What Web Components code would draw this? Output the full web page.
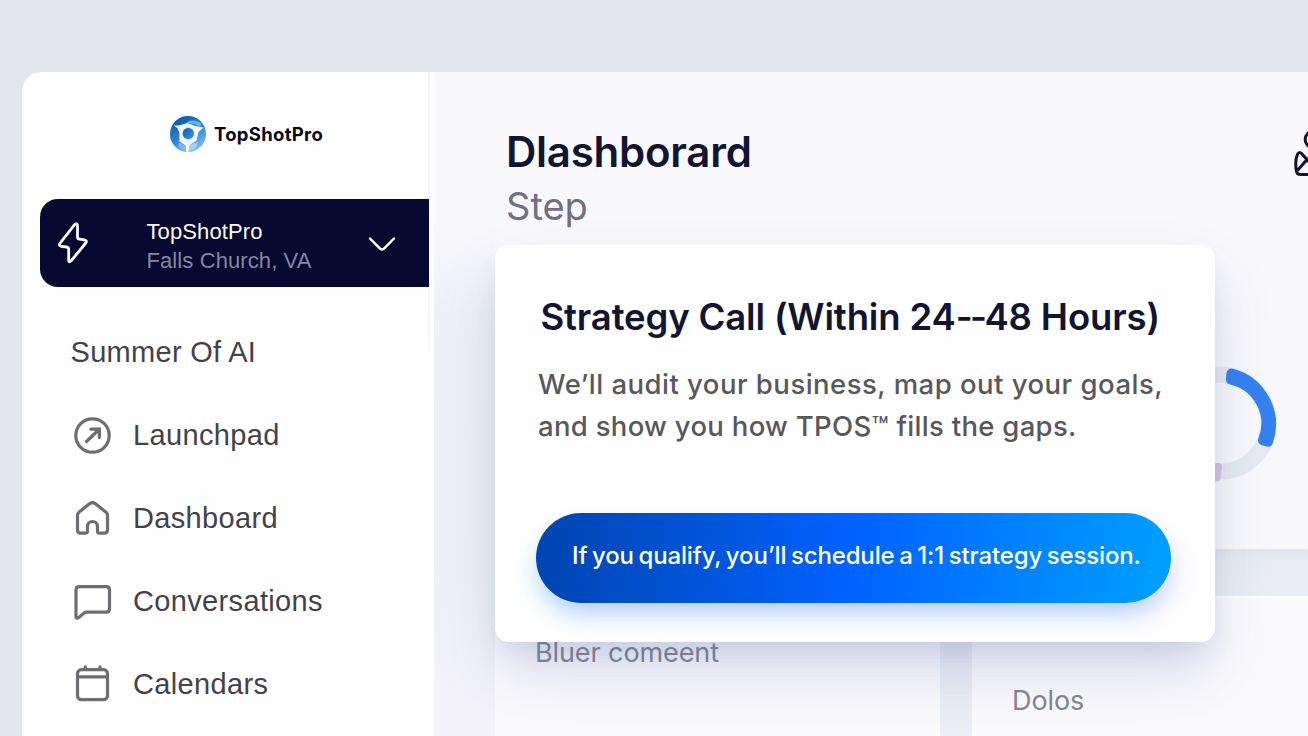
<!DOCTYPE html>
<html lang="en">
<head>
<meta charset="utf-8">
<title>TopShotPro</title>
<style>
  body {
    margin: 0;
    height: 736px;
    overflow: hidden;
    background: #e3e6ee;
    font-family: "Liberation Sans", sans-serif;
  }
  .dash { letter-spacing: -2.600px; }
</style>
</head>
<body>

<app-shell>
  <side-bar slot="side">
    <brand-logo slot="brand">TopShotPro</brand-logo>
    <account-switcher slot="account">
      TopShotPro
      <span slot="place">Falls Church, VA</span>
    </account-switcher>
    <nav-item plain>Summer Of AI</nav-item>
    <nav-item icon="launch">Launchpad</nav-item>
    <nav-item icon="home">Dashboard</nav-item>
    <nav-item icon="chat">Conversations</nav-item>
    <nav-item icon="calendar">Calendars</nav-item>
  </side-bar>

  <dash-stage>
    <page-title>Dlashborard<span slot="sub">Step</span></page-title>
    <people-icon slot="action"></people-icon>
    <progress-ring slot="chart"></progress-ring>
  </dash-stage>

  <card-row>
    <info-card style="--top: 41px">Bluer comeent</info-card>
    <info-card style="--top: 89px">Dolos</info-card>
  </card-row>

  <call-dialog slot="dialog">
    <span slot="heading">Strategy Call (Within 24<span class="dash">--</span>48 Hours)</span>
    <span slot="line1">We’ll audit your business, map out your goals,</span>
    <span slot="line2">and show you how TPOS™ fills the gaps.</span>
    <pill-button>If you qualify, you’ll schedule a 1:1 strategy session.</pill-button>
  </call-dialog>
</app-shell>

<script>
// small helper: registers an element whose shadow root is cloned from a template
function define(name, html) {
  const template = document.createElement('template');
  template.innerHTML = html;

  window.customElements.define(name, class extends HTMLElement {
    constructor() {
      super();
      this.attachShadow({ mode: 'open' });
      this.shadowRoot.appendChild(template.content.cloneNode(true));
    }
  });
}

define('app-shell', `
<style>
:host {
  display: grid;
  grid-template-columns: 412px 1fr;
  box-sizing: border-box;
  height: 736px;
  padding: 72px 0 0 22px;
  position: relative;
}
main {
  display: flex;
  flex-direction: column;
  min-width: 0;
  background: linear-gradient(#f9f8fc 150px, #eff1f8 240px, #eef0f8 480px, #f4f3f9 650px);
}
</style>
<slot name="side"></slot>
<main><slot></slot></main>
<slot name="dialog"></slot>
`);

define('side-bar', `
<style>
:host {
  display: flex;
  flex-direction: column;
  background: linear-gradient(#f4f3f8, #f9f9fb) 406px 0 / 2px 278px no-repeat #fefefe;
  border-radius: 20px 0 0 0;
}
.brand {
  height: 127px;
  box-sizing: border-box;
  padding: 44px 0 0 148px;
}
.account {
  padding: 0 5px 0 18px;
}
nav {
  display: flex;
  flex-direction: column;
  padding-top: 23px;
}
</style>
<div class="brand"><slot name="brand"></slot></div>
<div class="account"><slot name="account"></slot></div>
<nav><slot></slot></nav>
`);

define('brand-logo', `
<style>
:host {
  display: flex;
  align-items: center;
  gap: 8px;
  height: 36px;
  font: 700 18.500px/24px Inter, sans-serif;
  letter-spacing: 0.3px;
  color: #0a0a0c;
}
svg { display: block; }
</style>
<svg width="36" height="36" viewBox="0 0 36 36">
  <defs>
    <linearGradient id="g" x1="0.2" y1="0" x2="0.8" y2="1">
      <stop offset="0" stop-color="#0d50a8"/>
      <stop offset="0.5" stop-color="#2c86d6"/>
      <stop offset="1" stop-color="#8fc3f0"/>
    </linearGradient>
    <linearGradient id="d" x1="0" y1="0" x2="1" y2="1">
      <stop offset="0" stop-color="#0f57b0"/>
      <stop offset="1" stop-color="#3c96e2"/>
    </linearGradient>
  </defs>
  <circle cx="18" cy="18" r="18" fill="url(#g)"/>
  <path d="M17 6C22 3.500 28 4.500 31.500 8L30 11C26 8 22 7 17 7.500Z" fill="#6fb2ec"/>
  <path d="M19 29.500L28 26C27 31 24 34.500 19 35.500Z" fill="#a9cdf2"/>
  <path d="M8.500 31L9 26.500L15.500 30L16 35.500Q11.500 34.500 8.500 31Z" fill="#7fb8ee"/>
  <path d="M3.500 9.500L9 9.500L17.500 7L25.500 10L33.500 11.500L28.500 16L26.500 24.500L19.500 29.500L18.500 36L16 35.500L15.500 29.500L9.500 25.500L9.300 16.500L7.500 12Z" fill="#f4f9fe"/>
  <path d="M12 13.500L18 10.200L24.300 13.200L24.600 20.500L18.500 25.500L12 21.500Z" fill="#d5e7f8"/>
  <circle cx="18.300" cy="17.500" r="5.600" fill="url(#d)"/>
</svg>
<span><slot></slot></span>
`);

define('account-switcher', `
<style>
:host {
  display: flex;
  box-sizing: border-box;
  height: 88px;
  padding: 18px 33px 0 13px;
  background: #06082f;
  border-radius: 18px 0 0 18px;
  color: #fcfcf6;
  font-size: 22px;
  line-height: 29px;
  letter-spacing: 0.1px;
}
.text {
  display: flex;
  flex-direction: column;
  flex: 1;
  padding-left: 53.500px;
}
.place { color: #8586a3; }
svg { display: block; fill: none; stroke: #fff; stroke-linecap: round; stroke-linejoin: round; }
.bolt { margin-top: 2px; stroke-width: 2.800; }
.chevron { margin-top: 19px; stroke-width: 2.500; }
</style>
<svg class="bolt" width="40" height="48" viewBox="0 0 40 48">
  <path d="M21.400 5.800Q24.500 3.400 24.500 7V18Q24.500 20 26.500 20.200L31.500 20.900Q34.500 21.500 32.800 24L18 42Q15.700 44 15.700 41V30.500Q15.700 28.300 13.500 28L8.500 27.300Q5.300 26.700 7.200 24Z"/>
</svg>
<div class="text">
  <span><slot></slot></span>
  <span class="place"><slot name="place"></slot></span>
</div>
<svg class="chevron" width="28" height="18" viewBox="0 0 28 18">
  <path d="M2 2.500L11.500 12.200Q14 14.800 16.500 12.200L26 2.500"/>
</svg>
`);

const navIcons = {
  launch: '<circle cx="20.500" cy="20.500" r="16.700"/><path d="M14.500 26.500L27 14.500M19 14.200H27.400V22.500" stroke-linejoin="miter"/>',
  home: '<path d="M5.500 17.500Q5.500 15.300 7.200 14L17.800 5.600Q20.500 3.800 23.200 5.600L33.800 14Q35.500 15.300 35.500 17.500V32Q35.500 35.200 32.500 35.200H27.800Q25.500 35.200 25.500 33V28.500A5 5 0 0 0 15.500 28.500V33Q15.500 35.200 13.200 35.200H8.500Q5.500 35.200 5.500 32Z"/>',
  chat: '<path d="M4 8.800Q4 5.600 7.200 5.600H34.300Q37.500 5.600 37.500 8.800V28Q37.500 31.200 34.300 31.200H14.800Q13 31.200 11.800 32.200L6.500 36.700Q4 38.200 4 35.500Z"/>',
  calendar: '<rect x="5.500" y="5.700" width="30" height="30" rx="4"/><path d="M5.500 12.800H35.500M13.300 2.800V5.500M28 2.800V5.500"/>'
};

class NavItem extends HTMLElement {
  constructor() {
    super();
    this.attachShadow({ mode: 'open' });
    const icon = navIcons[this.getAttribute('icon')];
    this.shadowRoot.innerHTML = `
<style>
:host {
  display: flex;
  align-items: center;
  gap: 21px;
  height: 83px;
  padding-left: 50px;
  color: #444249;
  font-size: 29px;
  line-height: 34px;
  letter-spacing: 0.35px;
}
:host([plain]) { padding-left: 48.500px; letter-spacing: 0.3px; }
svg { display: block; fill: none; stroke: #6f6d74; stroke-width: 3.200; stroke-linecap: round; stroke-linejoin: round; }
</style>
${icon ? `<svg width="40" height="40" viewBox="0 0 40 40">${icon}</svg>` : ''}
<span><slot></slot></span>
`;
  }
}
window.customElements.define('nav-item', NavItem);

define('dash-stage', `
<style>
:host {
  display: flex;
  flex-direction: column;
  height: 477px;
  background: linear-gradient(90deg, transparent 61px, #f9f8fc 61px);
}
header {
  display: flex;
  justify-content: space-between;
  height: 287px;
  box-sizing: border-box;
  padding: 55px 0 0 72px;
}
.chart {
  display: flex;
  justify-content: flex-end;
  padding-right: 24px;
}
</style>
<header><slot></slot><slot name="action"></slot></header>
<div class="chart"><slot name="chart"></slot></div>
`);

define('page-title', `
<style>
:host {
  display: flex;
  flex-direction: column;
  gap: 6px;
  font-family: Inter, sans-serif;
}
.title { font-size: 42px; font-weight: 600; line-height: 50px; letter-spacing: -0.25px; color: #11152f; }
.sub { font-size: 38px; line-height: 46px; color: #716f85; }
</style>
<span class="title"><slot></slot></span>
<span class="sub"><slot name="sub"></slot></span>
`);

define('people-icon', `
<style>
:host { display: block; width: 16px; height: 52px; overflow: hidden; }
svg { display: block; fill: none; stroke: #11152a; stroke-width: 3; stroke-linecap: round; stroke-linejoin: round; }
</style>
<svg width="40" height="52" viewBox="0 0 40 52">
  <circle cx="21.500" cy="12.500" r="8.300"/>
  <path d="M4.500 44.500Q2.600 34 5.400 27.500Q7.500 23.500 10.500 27.500L16.500 34.500M4.500 44.500Q5 47.500 8.500 47.500H30M4.500 44.500L15.500 32"/>
</svg>
`);

define('progress-ring', `
<style>
:host { display: block; }
svg { display: block; }
</style>
<svg width="128" height="128" viewBox="-64 -64 128 128">
  <circle r="48.500" fill="none" stroke="#e7eaf1" stroke-width="16"/>
  <path d="M11.500 -49.500A52.500 52.500 0 0 1 48 18.800L43 17.300A45 45 0 0 0 11 -43.500Z" fill="#3481ef" stroke="#3481ef" stroke-width="10" stroke-linejoin="round"/>
  <path d="M-1.500 43.500L-3 55H-30V43.500Z" fill="#dcc0e2" stroke="#dcc0e2" stroke-width="7" stroke-linejoin="round"/>
</svg>
`);

define('card-row', `
<style>
:host {
  display: grid;
  grid-template-columns: 445px 1fr;
  gap: 32px;
  flex: 1;
  margin-left: 61px;
  padding-top: 47px;
  background: linear-gradient(#e3e6ee, #e9ecf2 12px, #ebeef3 47px, #ecedf5);
}
</style>
<slot></slot>
`);

define('info-card', `
<style>
:host {
  display: block;
  padding: var(--top) 40px 0;
  background: #fbfafd;
  border-top: 3px solid #fefefe;
  margin-bottom: -3px;
  font: 27px/32px Inter, sans-serif;
  letter-spacing: -0.1px;
  color: #85858f;
}
span { display: block; margin-top: -3px; }
</style>
<span><slot></slot></span>
`);

// floats above the dashboard
define('call-dialog', `
<style>
:host {
  position: absolute;
  left: 495px;
  top: 245px;
  box-sizing: border-box;
  display: flex;
  flex-direction: column;
  width: 719.500px;
  height: 397px;
  padding: 50px 44px 0 41px;
  background: #fefefe;
  border-radius: 14px;
  box-shadow: 0 32px 60px -4px rgba(75, 95, 165, 0.22), 0 14px 24px -6px rgba(75, 90, 140, 0.12);
  font-family: Inter, sans-serif;
  white-space: nowrap;
}
.heading {
  padding-left: 4.500px;
  font-size: 36.500px;
  font-weight: 600;
  line-height: 44px;
  letter-spacing: -0.15px;
  color: #11152f;
}
.text {
  display: flex;
  flex-direction: column;
  padding: 24px 0 66px 2px;
  font-size: 27.500px;
  font-weight: 450;
  line-height: 42px;
  letter-spacing: 0.48px;
  color: #58585b;
}
.second { letter-spacing: 0.3px; }
</style>
<div class="heading"><slot name="heading"></slot></div>
<div class="text">
  <span><slot name="line1"></slot></span>
  <span class="second"><slot name="line2"></slot></span>
</div>
<slot></slot>
`);

define('pill-button', `
<style>
:host {
  display: flex;
  align-items: center;
  box-sizing: border-box;
  height: 90px;
  padding: 0 0 5px 36px;
  border-radius: 45px;
  background: linear-gradient(97deg, #0047b5 4%, #0062ff 50%, #009dff 97%);
  box-shadow: 6px 14px 24px -4px rgba(110, 115, 235, 0.25), -6px 14px 22px -6px rgba(80, 190, 255, 0.3);
  color: #fff;
  font: 500 24px/30px Inter, sans-serif;
  letter-spacing: -0.15px;
  word-spacing: -1.600px;
}
</style>
<span><slot></slot></span>
`);
</script>
</body>
</html>
